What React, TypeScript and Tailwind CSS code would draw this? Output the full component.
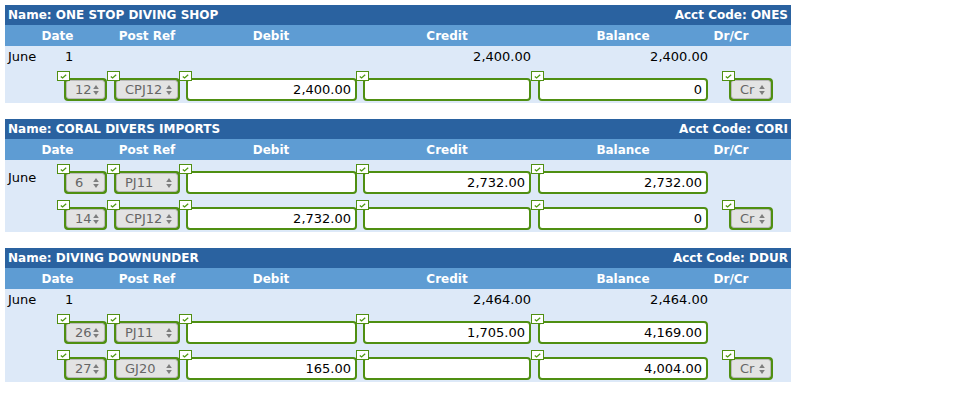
import React from "react";

type Row = {
  month?: boolean;
  date: string;
  ref: string;
  debit: string;
  credit: string;
  balance: string;
  drcr?: string;
};

type Account = {
  name: string;
  code: string;
  opening?: { credit: string; balance: string };
  rows: Row[];
};

const accounts: Account[] = [
  {
    name: "ONE STOP DIVING SHOP",
    code: "ONES",
    opening: { credit: "2,400.00", balance: "2,400.00" },
    rows: [{ date: "12", ref: "CPJ12", debit: "2,400.00", credit: "", balance: "0", drcr: "Cr" }],
  },
  {
    name: "CORAL DIVERS IMPORTS",
    code: "CORI",
    rows: [
      { month: true, date: "6", ref: "PJ11", debit: "", credit: "2,732.00", balance: "2,732.00" },
      { date: "14", ref: "CPJ12", debit: "2,732.00", credit: "", balance: "0", drcr: "Cr" },
    ],
  },
  {
    name: "DIVING DOWNUNDER",
    code: "DDUR",
    opening: { credit: "2,464.00", balance: "2,464.00" },
    rows: [
      { date: "26", ref: "PJ11", debit: "", credit: "1,705.00", balance: "4,169.00" },
      { date: "27", ref: "GJ20", debit: "165.00", credit: "", balance: "4,004.00", drcr: "Cr" },
    ],
  },
];

function Check() {
  return (
    <div className="absolute -left-[7px] -top-[7px] w-[13px] h-[10px] bg-white border border-[#4f8f12] flex items-center justify-center z-10">
      <svg width="7" height="5" viewBox="0 0 7 5">
        <path d="M0.8 2.4 L2.6 4 L6.2 0.8" fill="none" stroke="#4f9a12" strokeWidth="1.3" />
      </svg>
    </div>
  );
}

function Arrows() {
  return (
    <svg width="6" height="11" viewBox="0 0 6 11" className="absolute right-[5px] top-1/2 -translate-y-1/2">
      <path d="M3 0.5 L5.8 4.5 L0.2 4.5 Z" fill="#7d7d7d" />
      <path d="M3 10.5 L5.8 6.5 L0.2 6.5 Z" fill="#7d7d7d" />
    </svg>
  );
}

function Select({ value, width }: { value: string; width: string }) {
  return (
    <div className={`relative ${width} h-[23px]`}>
      <Check />
      <div className="w-full h-full rounded-[4px] border-2 border-[#4f8f12] bg-[#4f8f12]">
        <div className="relative w-full h-full rounded-[3px] border border-[#b9b9b9] bg-[#e3e3e3] flex items-center pl-[8px] text-[#666] text-[13px] leading-none">
          <span>{value}</span>
          <Arrows />
        </div>
      </div>
    </div>
  );
}

function TextField({ value, width }: { value: string; width: string }) {
  return (
    <div className={`relative ${width} h-[23px]`}>
      <Check />
      <div className="w-full h-full rounded-[4px] border-2 border-[#4f8f12] bg-white flex items-center justify-end pr-[4px] text-black text-[13px] leading-none">
        {value}
      </div>
    </div>
  );
}

function Table({ a }: { a: Account }) {
  return (
    <div className="w-[786px] mb-[16px]">
      <div className="h-[20px] bg-[#2a62a0] flex items-center justify-between px-[3px] text-white font-bold text-[12px]">
        <span>Name: {a.name}</span>
        <span>Acct Code: {a.code}</span>
      </div>
      <div className="h-[21px] bg-[#5e9cd3] flex items-center text-white font-bold text-[12px]">
        <div className="w-[105px] text-center">Date</div>
        <div className="w-[74px] text-center">Post Ref</div>
        <div className="w-[174px] text-center">Debit</div>
        <div className="w-[178px] text-center">Credit</div>
        <div className="w-[174px] text-center">Balance</div>
        <div className="w-[42px] text-center">Dr/Cr</div>
      </div>
      <div className="bg-[#dde9f8] text-[13px] text-black">
        {a.opening && (
          <div className="h-[21px] flex items-center">
            <div className="w-[52px] pl-[3px]">June</div>
            <div className="w-[50px] pl-[8px]">1</div>
            <div className="w-[73px]" />
            <div className="w-[177px]" />
            <div className="w-[174px] text-right">{a.opening.credit}</div>
            <div className="w-[177px] text-right">{a.opening.balance}</div>
          </div>
        )}
        {a.rows.map((r, i) => (
          <div key={i} className="h-[36px] flex items-start pt-[11px]">
            <div className="w-[52px] pl-[3px] self-center -mt-[11px]">{r.month ? "June" : ""}</div>
            <div className="pl-[7px]">
              <Select value={r.date} width="w-[43px]" />
            </div>
            <div className="pl-[7px]">
              <Select value={r.ref} width="w-[66px]" />
            </div>
            <div className="pl-[6px]">
              <TextField value={r.debit} width="w-[171px]" />
            </div>
            <div className="pl-[6px]">
              <TextField value={r.credit} width="w-[168px]" />
            </div>
            <div className="pl-[7px]">
              <TextField value={r.balance} width="w-[170px]" />
            </div>
            {r.drcr && (
              <div className="pl-[21px]">
                <Select value={r.drcr} width="w-[44px]" />
              </div>
            )}
          </div>
        ))}
      </div>
    </div>
  );
}

export default function App() {
  return (
    <div className="w-[956px] h-[410px] bg-white pl-[5px] pt-[5px]" style={{ fontFamily: '"DejaVu Sans", Verdana, sans-serif' }}>
      {accounts.map((a) => (
        <Table key={a.code} a={a} />
      ))}
    </div>
  );
}
